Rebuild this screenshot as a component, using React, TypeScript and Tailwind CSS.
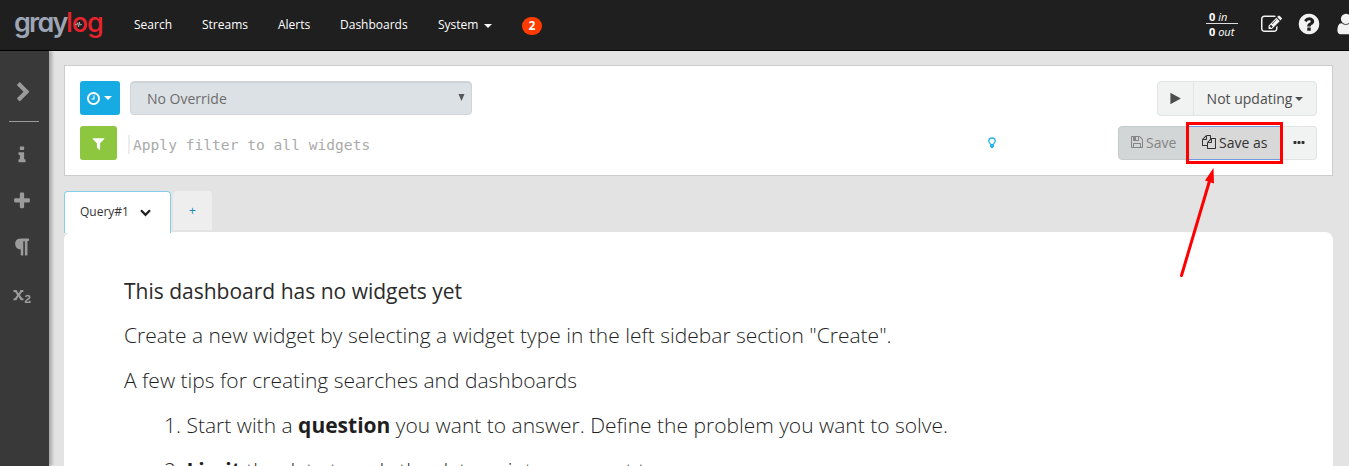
import type { ReactNode } from "react";

const paths = {
  info: "M1216 1344v128q0 26-19 45t-45 19h-512q-26 0-45-19t-19-45v-128q0-26 19-45t45-19h64v-384h-64q-26 0-45-19t-19-45v-128q0-26 19-45t45-19h384q26 0 45 19t19 45v576h64q26 0 45 19t19 45zm-128-1152v192q0 26-19 45t-45 19h-256q-26 0-45-19t-19-45v-192q0-26 19-45t45-19h256q26 0 45 19t19 45z",
  plus: "M1600 736v192q0 40-28 68t-68 28h-416v416q0 40-28 68t-68 28h-192q-40 0-68-28t-28-68v-416h-416q-40 0-68-28t-28-68v-192q0-40 28-68t68-28h416v-416q0-40 28-68t68-28h192q40 0 68 28t28 68v416h416q40 0 68 28t28 68z",
  chevronRight: "M1363 877l-742 742q-19 19-45 19t-45-19l-166-166q-19-19-19-45t19-45l531-531-531-531q-19-19-19-45t19-45l166-166q19-19 45-19t45 19l742 742q19 19 19 45t-19 45z",
  paragraph: "M1534 189v73q0 29-18.5 61t-42.5 32q-50 0-54 1-26 6-32 31-3 11-3 64v1152q0 25-18 43t-43 18h-108q-25 0-43-18t-18-43v-1218h-143v1218q0 25-17.5 43t-43.5 18h-108q-26 0-43.5-18t-17.5-43v-496q-147-12-245-59-126-58-192-179-64-117-64-259 0-166 88-286 88-118 209-159 111-37 417-37h479q25 0 43 18t18 43z",
  subscript: "M1025 1369v167h-248l-159-252-24-42q-8-9-11-21h-3l-9 21q-10 20-25 44l-155 250h-258v-167h128l197-291-185-272h-137v-168h276l139 228q2 4 23 42 8 9 11 21h3q3-9 11-21l25-42 140-228h257v168h-125l-184 267 204 296h109zm639 217v206h-514l-4-27q-3-45-3-46 0-64 26-117t65-86.5 84-65 84-54.5 65-54 26-64q0-38-29.5-62.5t-70.5-24.5q-51 0-97 39-14 11-36 38l-105-92q26-37 63-66 80-65 188-65 110 0 178 59.5t68 158.5q0 66-34.5 118.5t-84 86-99.5 62.5-87 63-41 73h232v-80h126z",
  filter: "M1595 295q17 41-14 70l-493 493v742q0 42-39 59-13 5-25 5-27 0-45-19l-256-256q-19-19-19-45v-486l-493-493q-31-29-14-70 17-39 59-39h1280q42 0 59 39z",
  clock: "M1024 544v448q0 14-9 23t-23 9h-320q-14 0-23-9t-9-23v-64q0-14 9-23t23-9h224v-352q0-14 9-23t23-9h64q14 0 23 9t9 23zm416 352q0-148-73-273t-198-198-273-73-273 73-198 198-73 273 73 273 198 198 273 73 273-73 198-198 73-273zm224 0q0 209-103 385.5t-279.5 279.5-385.5 103-385.5-103-279.5-279.5-103-385.5 103-385.5 279.5-279.5 385.5-103 385.5 103 279.5 279.5 103 385.5z",
  floppy: "M512 1536h768v-384h-768v384zm896 0h128v-896q0-14-10-38.5t-20-34.5l-281-281q-10-10-34-20t-39-10v416q0 40-28 68t-68 28h-576q-40 0-68-28t-28-68v-416h-128v1280h128v-416q0-40 28-68t68-28h832q40 0 68 28t28 68v416zm-384-928v-320q0-13-9.5-22.5t-22.5-9.5h-192q-13 0-22.5 9.5t-9.5 22.5v320q0 13 9.5 22.5t22.5 9.5h192q13 0 22.5-9.5t9.5-22.5zm640 32v928q0 40-28 68t-68 28h-1344q-40 0-68-28t-28-68v-1344q0-40 28-68t68-28h928q40 0 88 20t76 48l280 280q28 28 48 76t20 88z",
  files: "M1696 384q40 0 68 28t28 68v1216q0 40-28 68t-68 28h-960q-40 0-68-28t-28-68v-288h-544q-40 0-68-28t-28-68v-672q0-40 20-88t48-76l408-408q28-28 76-48t88-20h416q40 0 68 28t28 68v328q68-40 128-40h416zm-544 213l-299 299h299v-299zm-640-384l-299 299h299v-299zm196 647l316-316v-416h-384v416q0 40-28 68t-68 28h-416v640h512v-256q0-40 20-88t48-76zm956 804v-1152h-384v416q0 40-28 68t-68 28h-416v640h896z",
  edit: "M888 1184l116-116-152-152-116 116v56h96v96h56zm440-720q-16-16-33 1l-350 350q-17 17-1 33t33-1l350-350q17-17 1-33zm80 594v190q0 119-84.5 203.5t-203.5 84.5h-832q-119 0-203.5-84.5t-84.5-203.5v-832q0-119 84.5-203.5t203.5-84.5h832q63 0 117 25 15 7 18 23 3 17-9 29l-49 49q-14 14-32 8-23-6-45-6h-832q-66 0-113 47t-47 113v832q0 66 47 113t113 47h832q66 0 113-47t47-113v-126q0-13 9-22l64-64q15-15 35-7t20 29zm-96-738l288 288-672 672h-288v-288zm444 132l-92 92-288-288 92-92q28-28 68-28t68 28l152 152q28 28 28 68t-28 68z",
  question: "M1024 1376v-192q0-14-9-23t-23-9h-192q-14 0-23 9t-9 23v192q0 14 9 23t23 9h192q14 0 23-9t9-23zm256-672q0-88-55.5-163t-138.5-116-170-41q-243 0-371 213-15 24 8 42l132 100q7 6 19 6 16 0 25-12 53-68 86-92 34-24 86-24 48 0 85.5 26t37.5 59q0 38-20 61t-68 45q-63 28-115.5 86.5t-52.5 125.5v36q0 14 9 23t23 9h192q14 0 23-9t9-23q0-19 21.5-49.5t54.5-49.5q32-18 49-28.5t46-35 44.5-48 28-60.5 12.5-81zm384 192q0 209-103 385.5t-279.5 279.5-385.5 103-385.5-103-279.5-279.5-103-385.5 103-385.5 279.5-279.5 385.5-103 385.5 103 279.5 279.5 103 385.5z",
  user: "M1536 1399q0 109-62.5 187t-150.5 78h-854q-88 0-150.5-78t-62.5-187q0-85 8.5-160.5t31.5-152 58.5-131 94-89 134.5-34.5q131 128 313 128t313-128q76 0 134.5 34.5t94 89 58.5 131 31.5 152 8.5 160.5zm-256-887q0 159-112.5 271.5t-271.5 112.5-271.5-112.5-112.5-271.5 112.5-271.5 271.5-112.5 271.5 112.5 112.5 271.5z",
  play: "M1576 927l-1328 738q-23 13-39.5 3t-16.5-36v-1472q0-26 16.5-36t39.5 3l1328 738q23 13 23 31t-23 31z",
  ellipsis: "M576 736v192q0 40-28 68t-68 28h-192q-40 0-68-28t-28-68v-192q0-40 28-68t68-28h192q40 0 68 28t28 68zm512 0v192q0 40-28 68t-68 28h-192q-40 0-68-28t-28-68v-192q0-40 28-68t68-28h192q40 0 68 28t28 68zm512 0v192q0 40-28 68t-68 28h-192q-40 0-68-28t-28-68v-192q0-40 28-68t68-28h192q40 0 68 28t28 68z",
};

function Icon({ name, className }: { name: keyof typeof paths; className: string }) {
  return (
    <svg viewBox="0 0 1792 1792" fill="currentColor" className={`block shrink-0 overflow-visible ${className}`}>
      <path d={paths[name]} />
    </svg>
  );
}

function Caret({ className = "" }: { className?: string }) {
  return <span className={`block h-0 w-0 border-x-4 border-t-4 border-x-transparent border-t-current ${className}`} />;
}

function NavItem({ className, children }: { className: string; children: ReactNode }) {
  return <a className={`flex shrink-0 items-center whitespace-nowrap ${className}`}>{children}</a>;
}

function Header() {
  return (
    <header className="flex h-[51px] shrink-0 items-start overflow-hidden border-b border-black bg-[#1f1f1f] text-[12px] leading-[50px] text-white">
      <div className="flex w-[120px] shrink-0 pl-[14px] font-['Inter',sans-serif] text-[27px] leading-[46px] [font-feature-settings:'cv11']">
        <span className="w-[52px] font-semibold tracking-[-1.8px] text-[#9ea5b5]">gray</span>
        <span className="relative font-medium tracking-[-1px] text-[#e8232e]">
          log
          <svg viewBox="0 0 8 6" className="absolute left-[9px] top-[22px] h-[5px] w-[7px]" fill="none" stroke="#c5c8d0" strokeWidth="0.9">
            <path d="M0 3h2l1-2 1 5 1-6 1 4 .6-1H8" />
          </svg>
        </span>
      </div>
      <NavItem className="w-[68px] pl-[14px]">Search</NavItem>
      <NavItem className="w-[76px] pl-[14px]">Streams</NavItem>
      <NavItem className="w-[62px] pl-[14px]">Alerts</NavItem>
      <NavItem className="w-[98px] pl-[14px]">Dashboards</NavItem>
      <NavItem className="w-[98px] gap-[6px] pl-[14px]">
        System <Caret className="mt-[2px]" />
      </NavItem>
      <span className="mt-[17px] flex h-[18px] w-5 items-center justify-center rounded-full bg-[#ff3b00] text-[12px] leading-none font-bold">2</span>
      <div className="ml-auto mt-[10px] w-8 shrink-0 text-[11px] leading-[14px]">
        <div className="h-[14px] border-b border-[#ddd] pl-[3px] leading-[14px]"><b>0</b> <i>in</i></div>
        <div className="pl-[3px] leading-[15px]"><b>0</b> <i>out</i></div>
      </div>
      <Icon name="edit" className="mt-[14px] ml-[23px] h-[21px] w-[21px] text-[#f2f2f2]" />
      <Icon name="question" className="mt-[12px] ml-[15px] h-[24px] w-[24px] text-[#f2f2f2]" />
      <Icon name="user" className="-mr-[9px] mt-[12px] ml-[13px] h-[24px] w-[24px] text-[#f2f2f2]" />
    </header>
  );
}

function Sidebar() {
  return (
    <aside className="relative flex w-[49px] shrink-0 flex-col items-center bg-[#393939] text-[#9b9b9b] shadow-[3px_0_3px_rgba(0,0,0,0.25)]">
      <Icon name="chevronRight" className="mt-[31px] -ml-[2px] h-[21px] w-[21px]" />
      <div className="mt-[18px] -ml-px h-px w-[30px] bg-[#9b9b9b]" />
      <Icon name="info" className="mt-[23px] -ml-[6px] h-5 w-5" />
      <Icon name="plus" className="mt-[26px] -ml-[6px] h-5 w-5" />
      <Icon name="paragraph" className="mt-[26px] -ml-[6px] h-5 w-5" />
      <Icon name="subscript" className="mt-[26px] -ml-[6px] h-5 w-5" />
    </aside>
  );
}

function SearchBar() {
  return (
    <section className="flex h-[111px] w-[1269px] flex-col gap-[11px] border border-[#ccc] bg-white px-[15px] pt-[15px] text-[14px]">
      <div className="flex h-[34px]">
        <button className="flex w-10 items-center justify-center gap-[3px] rounded-[3px] bg-[#16ace3] text-white">
          <Icon name="clock" className="-ml-[2px] h-[15px] w-[15px]" />
          <Caret />
        </button>
        <div className="ml-[10px] flex w-[342px] items-center justify-between rounded border border-[#d1d5d8] bg-[#dce1e5] pr-[6px] pl-4 text-[#6c6c6c] shadow-[inset_0_1px_1px_rgba(0,0,0,0.075)]">
          No Override
          <svg viewBox="0 0 7 7" className="mb-[2px] h-[7px] w-[7px]" fill="#555"><path d="M.5 0h6L3.5 7z" /></svg>
        </div>
        <div className="ml-auto flex h-[35px] w-40 rounded border border-[#e3e5e5] bg-[#f1f2f2] text-[#4d4d4d]">
          <div className="flex w-9 items-center justify-center border-r border-[#e3e5e5]"><Icon name="play" className="h-[13px] w-[13px]" /></div>
          <div className="flex grow items-center justify-center gap-[3px]">Not updating <Caret /></div>
        </div>
      </div>
      <div className="flex h-[34px]">
        <button className="flex w-[37px] items-center justify-center rounded-[3px] bg-[#8dc63f] text-white"><Icon name="filter" className="h-[15px] w-[15px]" /></button>
        <div className="mt-[9px] ml-[11px] h-[19px] w-[2px] bg-[#ededed]" />
        <div className="ml-[3px] pt-[9px] font-['DejaVu_Sans_Mono',monospace] text-[14.6px] leading-5 text-[#aaa]">Apply filter to all widgets</div>
        <svg viewBox="0 0 10 12" className="mt-[11px] ml-auto h-[12px] w-[10px]" fill="none" stroke="#28b4e8">
          <path d="M3.500 7.500C3.300 6 1.800 5.500 1.800 3.900A3.200 2.900 0 0 1 8.200 3.900C8.200 5.500 6.700 6 6.500 7.500" strokeWidth="1.3" />
          <path d="M3 7h4v3H6v1H4v-1H3z" fill="#28b4e8" stroke="none" />
        </svg>
        <div className="ml-[121px] flex h-[34px] w-[199px] text-[#333]">
          <div className="flex w-[70px] items-center gap-[2px] rounded-l border border-[#c6cacb] bg-[#d2d6d7] pb-[2px] pl-[11px] text-[#858585]"><Icon name="floppy" className="h-[14px] w-[14px]" />Save</div>
          <div className="relative flex w-[94px] items-center border-y border-[#6f9be5] bg-[#d8d8d8] pb-[2px] pl-[14px]">
            <Icon name="files" className="mr-[3px] h-[14px] w-[14px]" />Save as
            <div className="absolute -top-[5px] -left-[2px] h-[42px] w-[97px] border-3 border-[#fe0000]" />
          </div>
          <div className="flex grow items-center justify-center rounded-r border border-l-0 border-[#e3e5e5] bg-[#f1f2f2]"><Icon name="ellipsis" className="h-[14px] w-[14px]" /></div>
        </div>
      </div>
    </section>
  );
}

function Tabs() {
  return (
    <div className="mt-[15px] flex h-[41px] text-[12px] text-[#333]">
      <div className="relative -mb-px flex h-[42px] w-[107px] items-center rounded-t border border-b-0 border-[#83cfea] bg-white pb-px pl-[15px]">
        Query#1
        <svg viewBox="0 0 11 8" className="mt-[2px] ml-[11px] h-[8px] w-[11px]" fill="none" stroke="#222" strokeWidth="2.3"><path d="M1 1.300l4.500 4.500L10 1.300" /></svg>
      </div>
      <div className="ml-[2px] flex h-[39px] w-[39px] items-center justify-center rounded-t bg-[#eee] text-[12px] text-[#1688b5]">+</div>
    </div>
  );
}

function EmptyDashboard() {
  return (
    <section className="h-[300px] w-[1269px] rounded-t-lg bg-white pt-[42px] pl-[60px] text-[21px] leading-[34px] text-[#1f1f1f]">
      <h2 className="text-[#2b2b2b]">This dashboard has no widgets yet</h2>
      <div className="mt-[10px] space-y-[11px] font-light">
        <p>Create a new widget by selecting a widget type in the left sidebar section "Create".</p>
        <p>A few tips for creating searches and dashboards</p>
        <p className="pl-10">1. Start with a <b className="font-bold">question</b> you want to answer. Define the problem you want to solve.</p>
        <p className="pl-10">2. <b className="font-bold">Limit</b> the data to only the data points you want to see.</p>
      </div>
    </section>
  );
}

export default function App() {
  return (
    <div className="relative flex h-[466px] w-[1349px] flex-col overflow-hidden bg-[#e3e3e3] font-['Open_Sans',sans-serif]">
      <Header />
      <div className="flex min-h-0 grow">
        <Sidebar />
        <main className="ml-[15px] grow pt-[14px]">
          <SearchBar />
          <Tabs />
          <EmptyDashboard />
        </main>
      </div>
      <svg className="pointer-events-none absolute left-[1170px] top-[160px] h-[125px] w-[60px]" viewBox="1170 160 60 125">
        <path d="M1181.500 275.500L1209.500 181" stroke="#fe0000" strokeWidth="3" strokeLinecap="round" />
        <path d="M1213.500 168l.5 15.500-9-3z" fill="#fe0000" />
      </svg>
    </div>
  );
}
